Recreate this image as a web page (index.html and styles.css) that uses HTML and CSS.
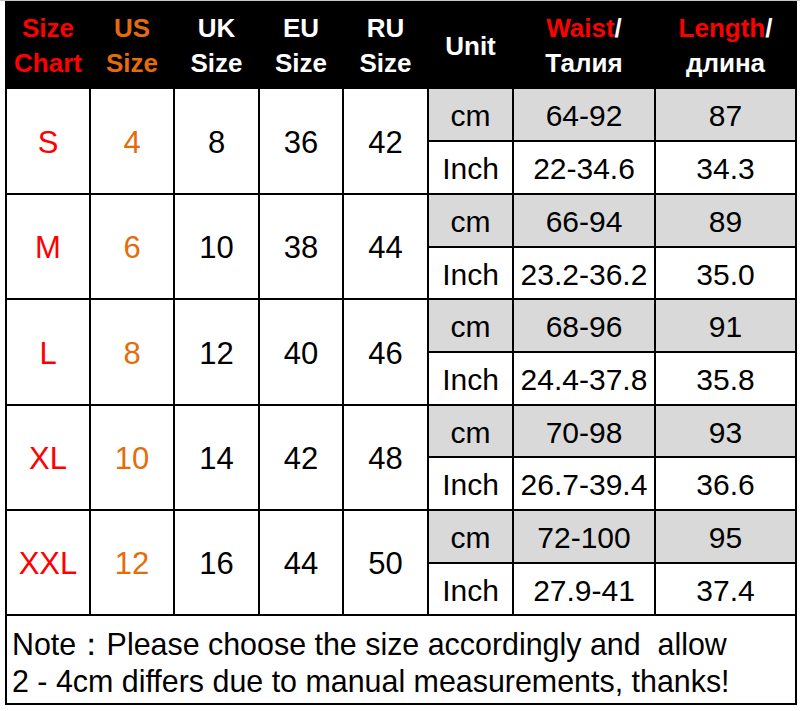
FILE: index.html
```html
<!DOCTYPE html>
<html>
<head>
<meta charset="utf-8">
<link rel="stylesheet" href="styles.css">
</head>
<body>
<div class="page">
  <div class="chart">
    <div class="hd"><span class="red">Size</span><span class="red">Chart</span></div>
    <div class="hd"><span class="orange">US</span><span class="orange">Size</span></div>
    <div class="hd"><span>UK</span><span>Size</span></div>
    <div class="hd"><span>EU</span><span>Size</span></div>
    <div class="hd"><span>RU</span><span>Size</span></div>
    <div class="hd"><span>Unit</span></div>
    <div class="hd"><span><span class="red">Waist</span>/</span><span>Талия</span></div>
    <div class="hd"><span><span class="red">Length</span>/</span><span>длина</span></div>

    <div class="big red">S</div><div class="big orange">4</div><div class="big">8</div><div class="big">36</div><div class="big">42</div>
    <div class="sub gray">cm</div><div class="sub gray">64-92</div><div class="sub gray">87</div>
    <div class="sub">Inch</div><div class="sub">22-34.6</div><div class="sub">34.3</div>

    <div class="big red">M</div><div class="big orange">6</div><div class="big">10</div><div class="big">38</div><div class="big">44</div>
    <div class="sub gray">cm</div><div class="sub gray">66-94</div><div class="sub gray">89</div>
    <div class="sub">Inch</div><div class="sub">23.2-36.2</div><div class="sub">35.0</div>

    <div class="big red">L</div><div class="big orange">8</div><div class="big">12</div><div class="big">40</div><div class="big">46</div>
    <div class="sub gray">cm</div><div class="sub gray">68-96</div><div class="sub gray">91</div>
    <div class="sub">Inch</div><div class="sub">24.4-37.8</div><div class="sub">35.8</div>

    <div class="big red">XL</div><div class="big orange">10</div><div class="big">14</div><div class="big">42</div><div class="big">48</div>
    <div class="sub gray">cm</div><div class="sub gray">70-98</div><div class="sub gray">93</div>
    <div class="sub">Inch</div><div class="sub">26.7-39.4</div><div class="sub">36.6</div>

    <div class="big red">XXL</div><div class="big orange">12</div><div class="big">16</div><div class="big">44</div><div class="big">50</div>
    <div class="sub gray">cm</div><div class="sub gray">72-100</div><div class="sub gray">95</div>
    <div class="sub">Inch</div><div class="sub">27.9-41</div><div class="sub">37.4</div>
  </div>
  <div class="note">
    <div class="note-line"><span>Note：Please choose the size accordingly and&nbsp; allow</span></div>
    <div class="note-line"><span>2 - 4cm differs due to manual measurements, thanks!</span></div>
  </div>
</div>
</body>
</html>
```

FILE: styles.css
```css
html, body {
  margin: 0;
  padding: 0;
  background: #fff;
}
body {
  font-family: "Liberation Sans", Arial, sans-serif;
  color: #000;
  border-top: 1px solid #c9c9c9;
}
.page {
  width: 792px;
  margin-left: 5px;
}
.chart {
  display: grid;
  grid-template-columns: 82px 82px 83px 82px 83px 83px 140px 139px;
  grid-template-rows: 84px 51px 51px 51px 50px 51px 51px 50px 51px 51px 50px;
  gap: 2px;
  background: #000;
  border: 2px solid #000;
}
.chart > div {
  background: #fff;
  display: flex;
  align-items: center;
  justify-content: center;
  box-sizing: border-box;
}
.chart > .hd {
  background: #000;
  color: #fff;
  flex-direction: column;
  font-weight: bold;
  font-size: 26px;
  line-height: 35px;
  padding-top: 2px;
}
.big {
  grid-row: span 2;
  font-size: 31px;
  padding-top: 3px;
}
.sub {
  font-size: 30px;
  padding-top: 3px;
}
.chart > .gray {
  background: #d9d9d9;
}
.red {
  color: #ff0000;
}
.orange {
  color: #e46c0a;
}
.note {
  border: 2px solid #000;
  border-top: none;
  padding: 10px 0 0 5px;
  box-sizing: border-box;
  height: 89px;
  font-size: 32px;
  line-height: 37px;
  overflow: hidden;
}
.note-line {
  white-space: nowrap;
}
.note-line span {
  display: inline-block;
  transform: scaleX(0.95);
  transform-origin: left center;
}
```
